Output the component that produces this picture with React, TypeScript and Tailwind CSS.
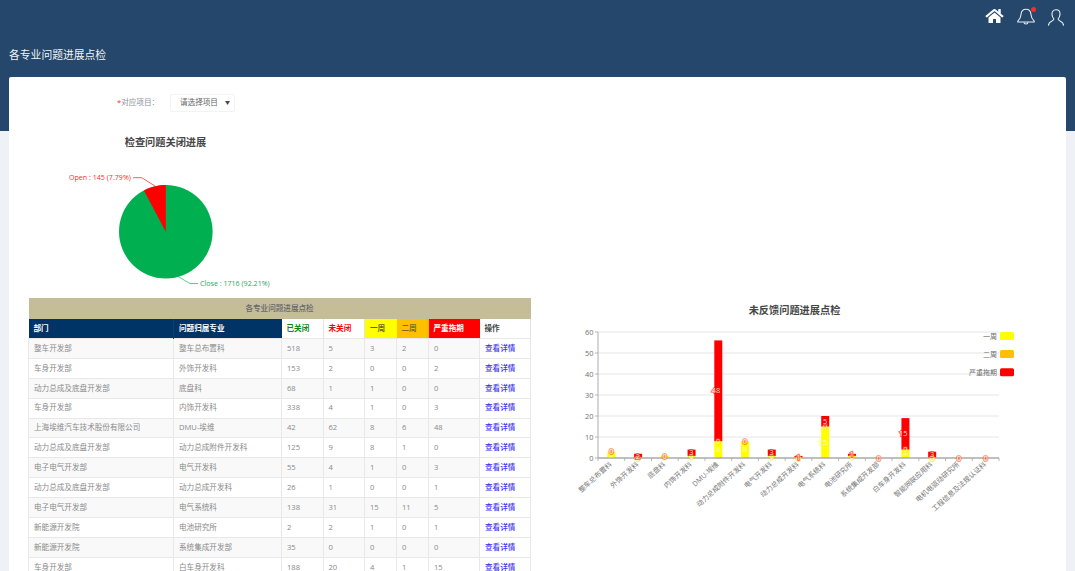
import React from "react";
import { FaHome } from "react-icons/fa";

const rows: [string, string, number, number, number, number, number][] = [
  ["整车开发部", "整车总布置科", 518, 5, 3, 2, 0],
  ["车身开发部", "外饰开发科", 153, 2, 0, 0, 2],
  ["动力总成及底盘开发部", "底盘科", 68, 1, 1, 0, 0],
  ["车身开发部", "内饰开发科", 338, 4, 1, 0, 3],
  ["上海埃维汽车技术股份有限公司", "DMU-埃维", 42, 62, 8, 6, 48],
  ["动力总成及底盘开发部", "动力总成附件开发科", 125, 9, 8, 1, 0],
  ["电子电气开发部", "电气开发科", 55, 4, 1, 0, 3],
  ["动力总成及底盘开发部", "动力总成开发科", 26, 1, 0, 0, 1],
  ["电子电气开发部", "电气系统科", 138, 31, 15, 11, 5],
  ["新能源开发院", "电池研究所", 2, 2, 1, 0, 1],
  ["新能源开发院", "系统集成开发部", 35, 0, 0, 0, 0],
  ["车身开发部", "白车身开发科", 188, 20, 4, 1, 15],
];

const bars: [string, number, number][] = [
  ["整车总布置科", 3, 0],
  ["外饰开发科", 0, 2],
  ["底盘科", 1, 0],
  ["内饰开发科", 1, 3],
  ["DMU-埃维", 8, 48],
  ["动力总成附件开发科", 8, 0],
  ["电气开发科", 1, 3],
  ["动力总成开发科", 0, 1],
  ["电气系统科", 15, 5],
  ["电池研究所", 1, 1],
  ["系统集成开发部", 0, 0],
  ["白车身开发科", 4, 15],
  ["智能网联应用科", 0, 3],
  ["电机电驱动研究所", 0, 0],
  ["工程信息及法规认证科", 0, 0],
];

const FONT = "'Open Sans','Noto Sans CJK SC',sans-serif";

function PieChart() {
  return (
    <svg className="block w-[280px] h-[186px]" viewBox="29 112 280 186" fontFamily={FONT}>
      <text x="165.5" y="146" textAnchor="middle" fontSize="10.2" fontWeight="700" fill="#464646">检查问题关闭进展</text>
      <circle cx="165.8" cy="231.7" r="46.8" fill="#00b050" />
      <path d="M165.8 231.7 L165.8 184.9 A46.8 46.8 0 0 0 143.9 190.4 Z" fill="#ff0000" />
      <path d="M155 186 L141.7 177.7 L133 177.7" fill="none" stroke="#ff0000" strokeOpacity="0.8" strokeWidth="0.8" />
      <text x="69" y="180.3" fontSize="7.1" fill="#ff2a2a">Open : 145 (7.79%)</text>
      <path d="M178 276.5 L190 283.5 L198 283.5" fill="none" stroke="#00b050" strokeOpacity="0.8" strokeWidth="0.8" />
      <text x="200" y="286" fontSize="7.1" fill="#14ad5c">Close : 1716 (92.21%)</text>
    </svg>
  );
}

function Label({ x, y, v, color, strength }: { x: number; y: number; v: number; color: string; strength: number }) {
  return (
    <text
      x={x + 2}
      y={y + 2.6}
      textAnchor="end"
      fontSize="7.4"
      fill="#ffffff"
      fillOpacity="0.85"
      stroke={color}
      strokeOpacity={strength}
      strokeWidth="2.2"
      paintOrder="stroke"
    >
      {v}
    </text>
  );
}

function BarChart() {
  const base = 458;
  const unit = 2.1;
  const band = 401 / 15;
  const ticks = [0, 10, 20, 30, 40, 50, 60];
  return (
    <svg className="block w-[480px] h-[273px]" viewBox="570 298 480 273" fontFamily={FONT}>
      <text x="794.5" y="314" textAnchor="middle" fontSize="10.2" fontWeight="700" fill="#464646">未反馈问题进展点检</text>
      {ticks.map((t) => (
        <g key={t}>
          {t > 0 && <line x1="598" x2="999" y1={base - t * unit} y2={base - t * unit} stroke="#e6e6e6" strokeWidth="1" />}
          <line x1="595" x2="598" y1={base - t * unit} y2={base - t * unit} stroke="#999" strokeWidth="0.7" />
          <text x="593.5" y={base - t * unit + 2.6} textAnchor="end" fontSize="7.4" fill="#707070">{t}</text>
        </g>
      ))}
      <line x1="598" x2="598" y1="332" y2="458" stroke="#999" strokeWidth="0.8" />
      {bars.map(([name, y, r], i) => {
        const c = 598 + band * (i + 0.5);
        const yh = y * unit;
        const rh = r * unit;
        return (
          <g key={name}>
            <rect x={c - 4} y={base - yh} width="8" height={yh} fill="#ffff00" />
            <rect x={c - 4} y={base - yh - rh} width="8" height={rh} fill="#ff0000" />
            <line x1={598 + band * i} x2={598 + band * i} y1="458" y2="461" stroke="#999" strokeWidth="0.7" />
            <text
              x={c + 1}
              y={465}
              textAnchor="end"
              fontSize="7"
              fill="#777777"
              transform={`rotate(-42 ${c + 1} 465)`}
            >
              {name}
            </text>
          </g>
        );
      })}
      <line x1="999" x2="999" y1="458" y2="461" stroke="#999" strokeWidth="0.7" />
      <line x1="598" x2="999" y1="458" y2="458" stroke="#aaaaaa" strokeWidth="1.3" />
      {bars.map(([name, y, r], i) => {
        const c = 598 + band * (i + 0.5);
        const yh = y * unit;
        const rh = r * unit;
        return (
          <g key={name}>
            {y > 0 || r === 0 ? null : <Label x={c} y={base} v={0} color="#ffff00" strength={0.5} />}
            {y > 0 && <Label x={c} y={base - yh / 2} v={y} color="#ffff00" strength={0.4} />}
            <Label x={c} y={base - yh} v={0} color="#ffc000" strength={0.25} />
            {r === 0
              ? <Label x={c} y={base - yh} v={0} color="#ff0000" strength={0.35} />
              : <Label x={c} y={base - yh - rh / 2} v={r} color="#ff0000" strength={0.55} />}
          </g>
        );
      })}
      {[
        ["一周", 332, "#ffff00"],
        ["二周", 350, "#ffc000"],
        ["严重拖期", 368.3, "#ff0000"],
      ].map(([t, y, col]) => (
        <g key={t as string}>
          <text x="997" y={(y as number) + 6.5} textAnchor="end" fontSize="7" fill="#6a6a6a">{t}</text>
          <rect x="1000" y={y as number} width="14" height="8" rx="1.5" fill={col as string} />
        </g>
      ))}
    </svg>
  );
}

function BellIcon() {
  return (
    <svg className="w-[18px] h-[17px]" viewBox="0 0 18 17" fill="none" stroke="#e8edf2" strokeWidth="1.1">
      <path d="M9 1.2 C5.6 1.2 4.2 3.8 4 6.5 C3.8 9.8 2.6 11.5 0.8 13.2 L0.8 14 L17.2 14 L17.2 13.2 C15.4 11.5 14.2 9.8 14 6.5 C13.8 3.8 12.4 1.2 9 1.2 Z" />
      <path d="M7 14.2 C7 16.6 11 16.6 11 14.2" />
    </svg>
  );
}

function UserIcon() {
  return (
    <svg className="w-[16px] h-[17px]" viewBox="0 0 16 17" fill="none" stroke="#e8edf2" strokeWidth="1.1">
      <path d="M8 0.8 C5 0.8 3.8 3 4 5.6 C4.2 7.8 5.2 9.2 5.9 10 C6 11 5.2 11.4 3.6 12.2 C1.8 13 0.6 14 0.4 16.6" />
      <path d="M8 0.8 C10.8 0.8 12.2 2.4 12 5.4 C11.8 7.8 10.8 9.2 10.1 10 C10 11 10.8 11.4 12.4 12.2 C14.2 13 15.4 14 15.6 16.6" />
    </svg>
  );
}

export default function App() {
  return (
    <div className="h-[571px] overflow-hidden bg-[#eef1f6] font-['Open_Sans','Noto_Sans_CJK_SC',sans-serif]">
      <header className="h-[131px] bg-[#24476b]">
        <div className="flex justify-end items-start gap-[13px] pt-[8px] pr-[11px] h-[46px]">
          <FaHome className="w-[19px] h-[16px] text-white" />
          <div className="relative">
            <BellIcon />
            <span className="absolute -top-[1px] right-[-1px] w-[5px] h-[5px] rounded-full bg-[#f23030]" />
          </div>
          <div className="mt-[1px]"><UserIcon /></div>
        </div>
        <h1 className="pl-[9px] text-[10.8px] leading-[18px] font-normal text-[#f1f4f7]">各专业问题进展点检</h1>
      </header>

      <main className="mx-[9px] -mt-[54px] relative bg-white rounded-t-[2px] pt-[17px] h-[494px] overflow-hidden">
        <div className="flex items-center h-[18px]">
          <label className="ml-[108px] w-[54px] text-[7.6px] text-[#8a8f99]">
            <span className="text-[#f23030]">*</span>对应项目：
          </label>
          <div className="flex items-center justify-between w-[65px] h-[18px] -ml-[1px] pl-[9px] pr-[4px] border border-[#f3f3f3] rounded-[2px] text-[7.6px] text-[#666]">
            <span>请选择项目</span>
            <span className="text-[5px] text-[#444]">▼</span>
          </div>
        </div>

        <div className="ml-[20px]"><PieChart /></div>

        <div className="flex">
          <table className="ml-[19px] w-[502px] shrink-0 table-fixed border-collapse text-[7.6px] text-[#8a8a8a]">
            <colgroup>
              <col className="w-[145px]" />
              <col className="w-[108px]" />
              <col className="w-[41.5px]" />
              <col className="w-[41.5px]" />
              <col className="w-[32px]" />
              <col className="w-[32px]" />
              <col className="w-[51px]" />
              <col className="w-[51px]" />
            </colgroup>
            <thead>
              <tr className="h-[20.5px]">
                <th colSpan={8} className="bg-[#c4bd97] font-medium text-center text-[#66666e]">各专业问题进展点检</th>
              </tr>
              <tr className="h-[20px] text-left font-bold">
                <th className="bg-[#003366] text-white pl-[5px] border-r border-[#0c3f70]">部门</th>
                <th className="bg-[#003366] text-white pl-[5px]">问题归属专业</th>
                <th className="bg-white text-[#0a8a0a] pl-[5px] border-r border-[#e4e4e4]">已关闭</th>
                <th className="bg-white text-[#ff0000] pl-[5px] border-r border-[#e4e4e4]">未关闭</th>
                <th className="bg-[#ffff00] text-[#66661a] pl-[5px]">一周</th>
                <th className="bg-[#ffc000] text-[#806a2a] pl-[5px]">二周</th>
                <th className="bg-[#ff0000] text-white pl-[5px]">严重拖期</th>
                <th className="bg-white text-[#444] pl-[5px] border-r border-[#e4e4e4]">操作</th>
              </tr>
            </thead>
            <tbody>
              {rows.map((r, i) => (
                <tr key={i} className={i % 2 === 0 ? "h-[19.9px] bg-[#f9f9f9]" : "h-[19.9px] bg-white"}>
                  {r.map((c, j) => (
                    <td key={j} className="pl-[5px] py-0 border border-[#e8e8e8] whitespace-nowrap overflow-hidden">{c}</td>
                  ))}
                  <td className="pl-[5px] py-0 border border-[#e8e8e8] bg-white font-medium text-[#3f35f0]">查看详情</td>
                </tr>
              ))}
            </tbody>
          </table>
          <div className="ml-[39px]"><BarChart /></div>
        </div>
      </main>
    </div>
  );
}
